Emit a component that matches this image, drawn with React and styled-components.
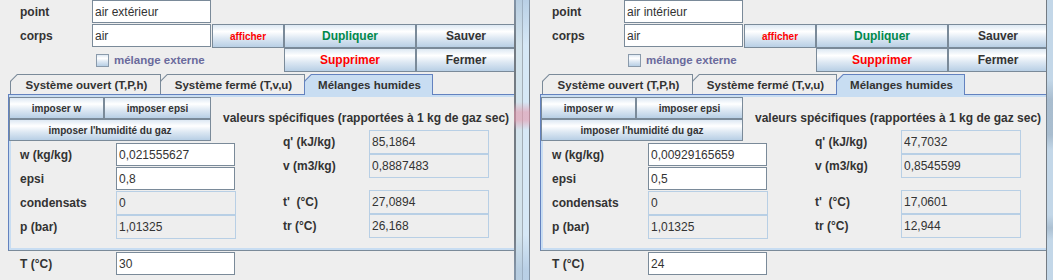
import React from "react";
import styled, { createGlobalStyle } from "styled-components";

const GlobalStyle = createGlobalStyle`
  * { box-sizing: border-box; }
  html, body { margin: 0; padding: 0; background: #eeeeee; }
  body {
    font-family: "Liberation Sans", Arial, sans-serif;
    color: #333333;
  }
`;

const windows = [
  {
    point: "air extérieur",
    w: "0,021555627",
    epsi: "0,8",
    condensats: "0",
    p: "1,01325",
    q: "85,1864",
    v: "0,8887483",
    tp: "27,0894",
    tr: "26,168",
    T: "30",
  },
  {
    point: "air intérieur",
    w: "0,00929165659",
    epsi: "0,5",
    condensats: "0",
    p: "1,01325",
    q: "47,7032",
    v: "0,8545599",
    tp: "17,0601",
    tr: "12,944",
    T: "24",
  },
];

const Desktop = styled.div`
  display: flex;
  width: 1055px;
  height: 280px;
  margin-left: -2px;
  overflow: hidden;
`;

const Window = styled.div`
  flex: 0 0 516px;
  height: 280px;
  display: flex;
  flex-direction: column;
  overflow: hidden;
  background: #eeeeee;
`;

const Frame = styled.div`
  flex: 0 0 ${(p) => p.$w}px;
  height: 280px;
  background: ${(p) =>
    p.$edge
      ? `linear-gradient(to bottom, transparent 0, transparent 80px, rgba(120,140,160,.35) 100px, rgba(120,140,160,.35) 135px, transparent 150px, transparent 215px, rgba(120,140,160,.3) 228px, transparent 240px),
         linear-gradient(to right, #737b83 0 1px, #c3d7e8 1px)`
      : `linear-gradient(to bottom, transparent 0, transparent 102px, rgba(228,150,170,.6) 112px, rgba(228,150,170,.6) 120px, transparent 130px),
         linear-gradient(to bottom, rgba(150,178,210,.45) 0, transparent 45px, transparent 235px, rgba(150,178,210,.45) 270px),
         linear-gradient(to right, #737b83 0 2px, #d3e3ec 2px 8px, #a2adb5 8px 9px, #d6e8f6 9px 15px, #737b83 15px 16px)`};
`;

const TopGrid = styled.div`
  display: grid;
  grid-template-columns: 94px 120px 72px 132px 100px;
  grid-template-rows: 24px 24px 24px;
`;

const FormLabel = styled.span`
  display: flex;
  align-items: center;
  padding-left: 22px;
  font-size: 12px;
  font-weight: bold;
`;

const Field = styled.input.attrs({ readOnly: true })`
  width: ${(p) => p.$w || 119}px;
  height: ${(p) => (p.$locked ? 24 : 23)}px;
  margin: 0;
  padding: 0 2px;
  border: 1px solid ${(p) => (p.$locked ? "#b8cfe5" : "#7a8a99")};
  background: ${(p) => (p.$locked ? "#eeeeee" : "#ffffff")};
  font-family: "Liberation Sans", Arial, sans-serif;
  font-size: 12px;
  color: #333333;
  outline: none;
  align-self: start;
  grid-column: ${(p) => p.$span || "auto"};
`;

const Button = styled.button`
  width: 100%;
  height: ${(p) => p.$h || 24}px;
  margin: 0;
  padding: 0;
  border: 1px solid #7a8a99;
  background: linear-gradient(to bottom, #dde8f3 0%, #ffffff 30%, #dde8f3 60%, #b8cfe5 100%);
  font-family: "Liberation Sans", Arial, sans-serif;
  font-weight: bold;
  font-size: ${(p) => p.$size || 12}px;
  color: ${(p) => p.$color || "#333333"};
  white-space: nowrap;
  grid-column: ${(p) => p.$span || "auto"};
`;

const CheckRow = styled.label`
  grid-column: 2 / 4;
  display: flex;
  align-items: center;
  padding-left: 4px;
  gap: 5px;
  font-size: 11.5px;
  font-weight: bold;
  color: #6a6a9c;
`;

const CheckBox = styled.span`
  width: 13px;
  height: 13px;
  margin-top: 1px;
  border: 1px solid #8a9aab;
  background: linear-gradient(to bottom, #dde8f3 0%, #ffffff 30%, #dde8f3 60%, #b8cfe5 100%);
`;

const TabBar = styled.div`
  display: flex;
  height: 20px;
  margin: 2px 0 0 12px;
`;

const Tab = styled.div`
  flex: 0 0 ${(p) => p.$w}px;
  height: ${(p) => (p.$active ? 21 : 20)}px;
  margin-left: -1px;
  padding: 1px 1px 0 1px;
  background: ${(p) => (p.$active ? "#6382bf" : "#7a8a99")};
  clip-path: polygon(0 7px, 7px 0, 100% 0, 100% 100%, 0 100%);
  position: relative;
  z-index: ${(p) => (p.$active ? 1 : 0)};

  &:first-child {
    margin-left: 0;
  }
`;

const TabFace = styled.div`
  display: flex;
  align-items: center;
  justify-content: center;
  height: ${(p) => (p.$active ? 20 : 19)}px;
  padding-left: 2px;
  background: ${(p) => (p.$active ? "#c8ddf2" : "#eeeeee")};
  clip-path: polygon(0 6.5px, 6.5px 0, 100% 0, 100% 100%, 0 100%);
  font-size: 11.5px;
  font-weight: bold;
  white-space: nowrap;
`;

const TabContent = styled.div`
  display: flex;
  width: 512px;
  height: 157px;
  margin-left: 10px;
  padding-top: 2px;
  border: 1px solid #6382bf;
  border-bottom-color: #7a8a99;
  box-shadow: inset 0 0 0 2px #c8ddf2;
`;

const Column = styled.div`
  display: flex;
  flex-direction: column;
  flex: ${(p) => (p.$w ? `0 0 ${p.$w}px` : "1")};
  padding-top: ${(p) => p.$top || 0}px;
`;

const ButtonBlock = styled.div`
  display: grid;
  grid-template-columns: 95px 107px;
  grid-template-rows: 22px 22px;
  width: 202px;
`;

const SectionTitle = styled.div`
  height: 16px;
  margin-left: -13px;
  line-height: 16px;
  font-size: 12px;
  font-weight: bold;
  white-space: nowrap;
`;

const Row = styled.div`
  display: flex;
  align-items: center;
  margin-top: ${(p) => p.$mt || 0}px;
`;

const RowLabel = styled.span`
  flex: 0 0 ${(p) => p.$w}px;
  padding-left: ${(p) => p.$indent}px;
  font-size: 12px;
  font-weight: bold;
  white-space: pre;
`;

const LeftRow = ({ label, value, locked, mt }) => (
  <Row $mt={mt}>
    <RowLabel $w={107} $indent={11}>{label}</RowLabel>
    <Field value={value} $locked={locked} $w={locked ? 120 : 119} />
  </Row>
);

const RightRow = ({ label, value, mt }) => (
  <Row $mt={mt}>
    <RowLabel $w={133} $indent={47}>{label}</RowLabel>
    <Field value={value} $locked $w={120} />
  </Row>
);

const PointWindow = ({ data }) => (
  <Window>
    <TopGrid>
      <FormLabel>point</FormLabel>
      <Field value={data.point} $span="2 / -1" />
      <FormLabel>corps</FormLabel>
      <Field value="air" />
      <Button $size={10} $color="#ff0000">afficher</Button>
      <Button $color="#00894b">Dupliquer</Button>
      <Button>Sauver</Button>
      <CheckRow>
        <CheckBox />
        mélange externe
      </CheckRow>
      <Button $color="#ff0000">Supprimer</Button>
      <Button>Fermer</Button>
    </TopGrid>

    <TabBar>
      <Tab $w={151}>
        <TabFace>Système ouvert (T,P,h)</TabFace>
      </Tab>
      <Tab $w={145}>
        <TabFace>Système fermé (T,v,u)</TabFace>
      </Tab>
      <Tab $w={129} $active>
        <TabFace $active>Mélanges humides</TabFace>
      </Tab>
    </TabBar>

    <TabContent>
      <Column $w={226}>
        <ButtonBlock>
          <Button $h={22} $size={10}>imposer w</Button>
          <Button $h={22} $size={10}>imposer epsi</Button>
          <Button $h={22} $size={10} $span="1 / -1">
            imposer l'humidité du gaz
          </Button>
        </ButtonBlock>
        <LeftRow label="w (kg/kg)" value={data.w} mt={2} />
        <LeftRow label="epsi" value={data.epsi} mt={1} />
        <LeftRow label="condensats" value={data.condensats} locked mt={1} />
        <LeftRow label="p (bar)" value={data.p} locked />
      </Column>
      <Column $top={13}>
        <SectionTitle>valeurs spécifiques (rapportées à 1 kg de gaz sec)</SectionTitle>
        <RightRow label="q' (kJ/kg)" value={data.q} mt={4} />
        <RightRow label="v (m3/kg)" value={data.v} />
        <RightRow label={"t'  (°C)"} value={data.tp} mt={12} />
        <RightRow label="tr (°C)" value={data.tr} />
      </Column>
    </TabContent>

    <Row $mt={1}>
      <RowLabel $w={118} $indent={22}>T (°C)</RowLabel>
      <Field value={data.T} />
    </Row>
  </Window>
);

export default function App() {
  return (
    <>
      <GlobalStyle />
      <Desktop>
        <PointWindow data={windows[0]} />
        <Frame $w={16} />
        <PointWindow data={windows[1]} />
        <Frame $w={7} $edge />
      </Desktop>
    </>
  );
}
